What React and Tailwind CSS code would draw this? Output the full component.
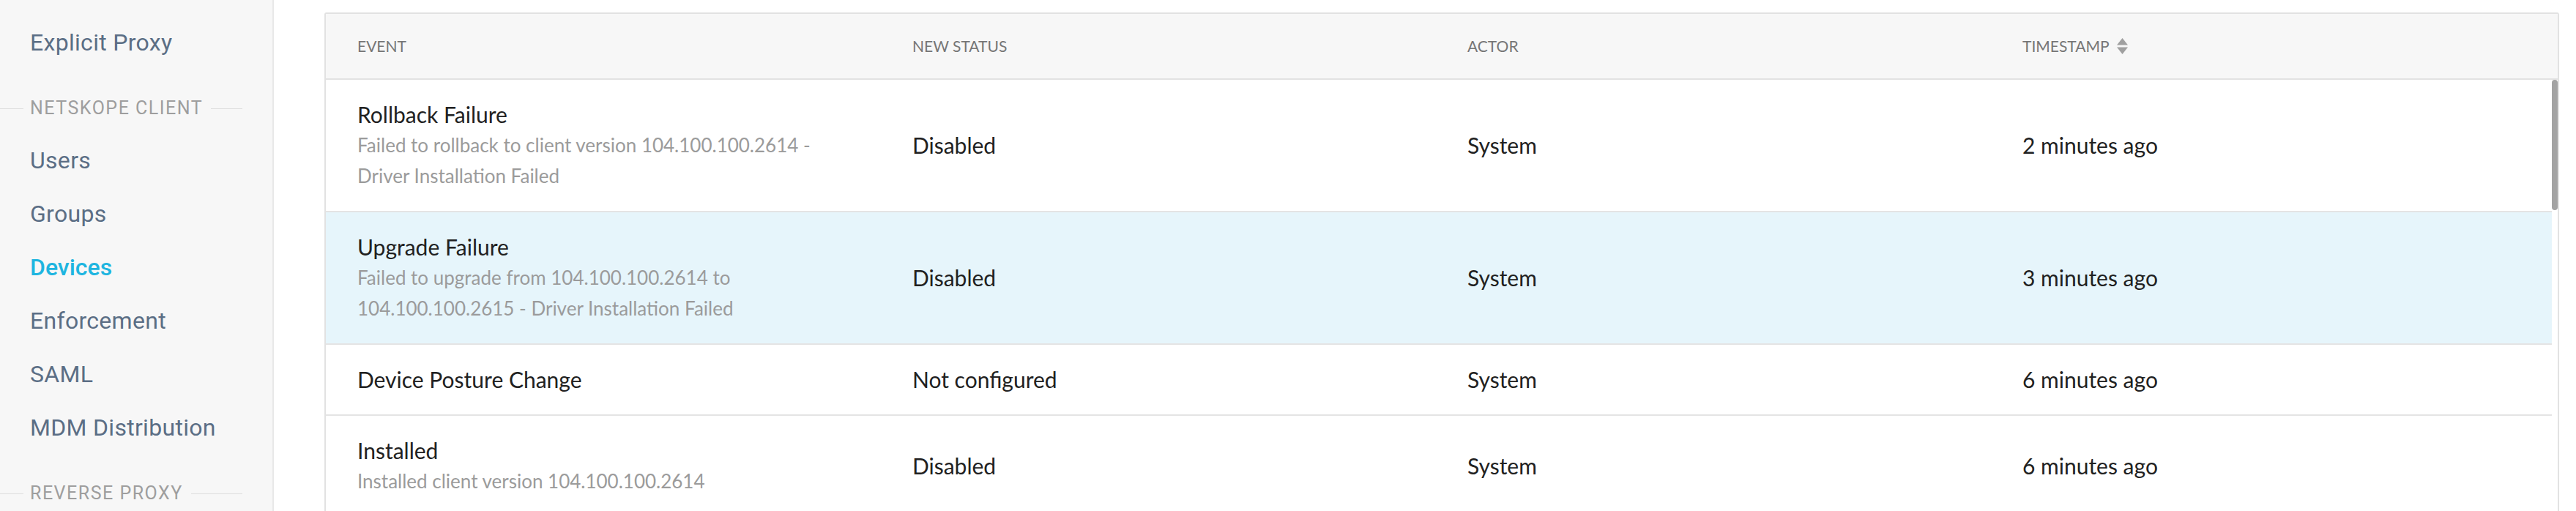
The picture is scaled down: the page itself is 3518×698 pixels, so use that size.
import React from 'react';

const sections = [
  { items: ['Explicit Proxy'] },
  { title: 'NETSKOPE CLIENT', items: ['Users', 'Groups', 'Devices', 'Enforcement', 'SAML', 'MDM Distribution'] },
  { title: 'REVERSE PROXY', items: [] },
];

const events = [
  {
    name: 'Rollback Failure',
    detail: 'Failed to rollback to client version 104.100.100.2614 - Driver Installation Failed',
    status: 'Disabled',
    actor: 'System',
    time: '2 minutes ago',
  },
  {
    name: 'Upgrade Failure',
    detail: 'Failed to upgrade from 104.100.100.2614 to 104.100.100.2615 - Driver Installation Failed',
    status: 'Disabled',
    actor: 'System',
    time: '3 minutes ago',
    selected: true,
  },
  {
    name: 'Device Posture Change',
    status: 'Not configured',
    actor: 'System',
    time: '6 minutes ago',
  },
  {
    name: 'Installed',
    detail: 'Installed client version 104.100.100.2614',
    status: 'Disabled',
    actor: 'System',
    time: '6 minutes ago',
  },
];

const SortIcon = () => (
  <svg width="15" height="22" viewBox="0 0 15 22" className="ml-[10px]">
    <polygon points="0,9.5 7.5,0 15,9.5" fill="#a0a0a0" />
    <polygon points="0,12.5 15,12.5 7.5,22" fill="#a0a0a0" />
  </svg>
);

const SectionTitle = ({ text }) => (
  <div className="flex items-center h-[30px] mt-[38px] mb-[20px] pr-[41px]">
    <span className="w-[32px] h-px bg-[#dedede]" />
    <span className="ml-[9px] mr-[11px] text-[25px] leading-[30px] tracking-[1.5px] text-[#9e9e9e]">
      {text}
    </span>
    <span className="flex-1 h-px bg-[#dedede]" />
  </div>
);

const Sidebar = () => (
  <aside
    className="w-[374px] shrink-0 h-full bg-[#f7f7f7] border-r-2 border-[#e8e8e8] pt-[22px]"
    style={{ fontFamily: 'Roboto, "Noto Sans", sans-serif' }}
  >
    {sections.map((s, i) => (
      <div key={i}>
        {s.title && <SectionTitle text={s.title} />}
        {s.items.map((item) => (
          <div
            key={item}
            className={
              item === 'Devices'
                ? 'h-[73px] leading-[73px] pl-[41px] text-[32px] font-medium text-[#1eb5e0]'
                : 'h-[73px] leading-[73px] pl-[41px] text-[32px] tracking-[0.3px] text-[#5b6e85]'
            }
          >
            {item}
          </div>
        ))}
      </div>
    ))}
  </aside>
);

const EventTable = () => (
  <div className="border-2 border-[#e2e2e2] rounded-[3px] bg-white overflow-hidden">
    {/* header */}
    <div className="grid grid-cols-[758px_758px_758px_1fr] h-[90px] items-center bg-[#f7f7f7] border-b-2 border-[#e2e2e2] text-[21px] leading-[30px] text-[#767676]">
      <div className="pl-[43px]">EVENT</div>
      <div className="pl-[43px]">NEW STATUS</div>
      <div className="pl-[43px]">ACTOR</div>
      <div className="pl-[43px] flex items-center">
        TIMESTAMP
        <SortIcon />
      </div>
    </div>

    {/* body + scrollbar */}
    <div className="flex">
      <div className="flex-1">
        {events.map((e) => (
          <div
            key={e.name}
            className={`grid grid-cols-[758px_758px_758px_1fr] items-center pt-[26px] pb-[27px] border-b-2 border-[#e4e4e4] text-[30px] leading-[42px] text-[#212121] ${
              e.selected ? 'bg-[#e6f5fb]' : 'bg-white'
            }`}
          >
            <div className="pl-[43px] pr-[43px]">
              <div>{e.name}</div>
              {e.detail && <div className="text-[26px] leading-[42px] text-[#9b9b9b]">{e.detail}</div>}
            </div>
            <div className="pl-[43px]">{e.status}</div>
            <div className="pl-[43px]">{e.actor}</div>
            <div className="pl-[43px]">{e.time}</div>
          </div>
        ))}
      </div>
      <div className="w-[8px] shrink-0">
        <div className="h-[178px] rounded-full bg-[#a3a3a3]" />
      </div>
    </div>
  </div>
);

export default function App() {
  return (
    <div className="flex w-full h-[698px] overflow-hidden bg-white">
      <Sidebar />
      <main
        className="flex-1 min-w-0 pl-[69px] pr-[23px] pt-[17px]"
        style={{ fontFamily: 'Lato, "Noto Sans", sans-serif' }}
      >
        <EventTable />
      </main>
    </div>
  );
}
